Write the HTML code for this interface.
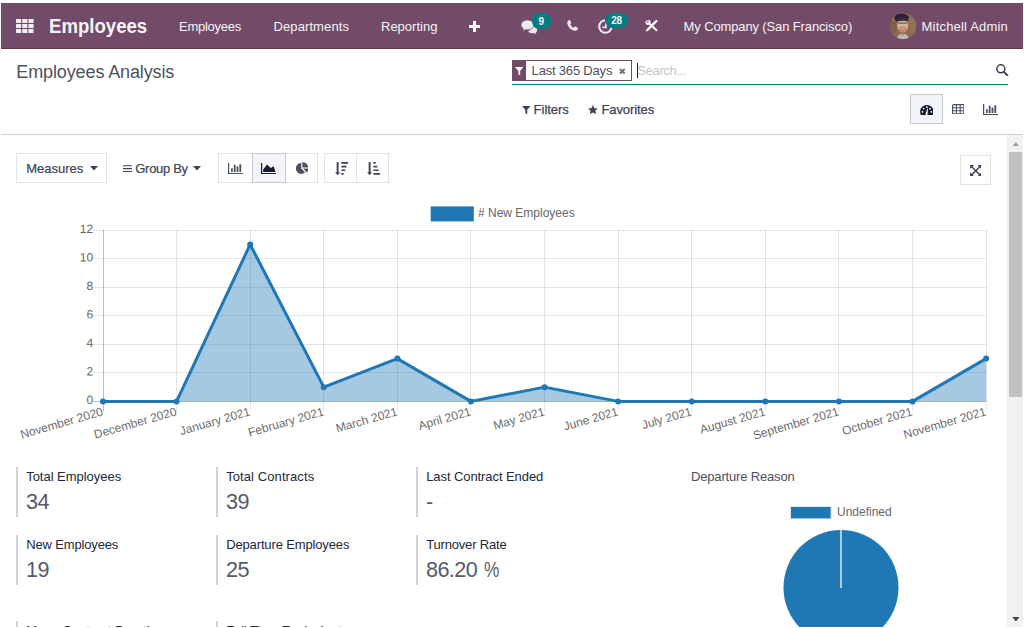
<!DOCTYPE html>
<html lang="en">
<head>
<meta charset="utf-8">
<title>Odoo - Employees Analysis</title>
<style>
*{box-sizing:border-box;margin:0;padding:0}
html,body{width:1024px;height:628px;overflow:hidden;background:#fff}
body{font-family:"Liberation Sans",sans-serif;font-size:13px;color:#4c5160;position:relative}
#app{position:absolute;left:0;top:0;width:1024px;height:628px;overflow:hidden;background:#fff}
#app span,#app a,#app div,#app nav,#app header,#app section,#app button,#app svg,#app h1,#app label{position:absolute;white-space:nowrap}
#app a{text-decoration:none}
nav.navbar{left:1px;top:3px;width:1022px;height:46px;background:#714b67;border-bottom:1px solid #5a3b52}
.btn{border:1px solid #e1e2e5;background:#fff}
.btn.active{background:#f3f4f7;border-color:#c5c9d2}
.stat{width:2px;background:#cfd2d8}
</style>
</head>
<body>
<div id="app">
<nav class="navbar">
<svg style="left:14.6px;top:16.1px" width="18" height="14" viewBox="0 0 18 14"><g fill="#f0eef0"><rect x="0" y="0" width="5.2" height="3.9" rx="0.5"/><rect x="6.2" y="0" width="5.2" height="3.9" rx="0.5"/><rect x="12.4" y="0" width="5.2" height="3.9" rx="0.5"/><rect x="0" y="5" width="5.2" height="3.9" rx="0.5"/><rect x="6.2" y="5" width="5.2" height="3.9" rx="0.5"/><rect x="12.4" y="5" width="5.2" height="3.9" rx="0.5"/><rect x="0" y="10" width="5.2" height="3.9" rx="0.5"/><rect x="6.2" y="10" width="5.2" height="3.9" rx="0.5"/><rect x="12.4" y="10" width="5.2" height="3.9" rx="0.5"/></g></svg>
<a style="left:48px;top:12px;font-size:20px;line-height:22px;height:22px;color:#f6f3f5;font-weight:700;transform:scaleX(0.93);transform-origin:0 0;">Employees</a>
<a style="left:178px;top:16.4px;font-size:13px;line-height:15px;height:15px;color:#f6f3f5;letter-spacing:-0.26px;">Employees</a>
<a style="left:272.5px;top:16.4px;font-size:13px;line-height:15px;height:15px;color:#f6f3f5;letter-spacing:0.1px;">Departments</a>
<a style="left:380px;top:16.4px;font-size:13px;line-height:15px;height:15px;color:#f6f3f5;">Reporting</a>
<svg style="left:468px;top:17.600px" width="11" height="11" viewBox="0 0 11 11"><path d="M4 0h3v4h4v3h-4v4h-3v-4h-4v-3h4z" fill="#fff"/></svg>
<svg style="left:519.500px;top:16.700px" width="17" height="14" viewBox="0 0 17 14"><path d="M11.600 6.400c2.600 .200 4.700 1.700 4.700 3.500c0 1.100-.700 2-1.800 2.700c.200 .500 .600 .900 1.100 1.300c-1 0-2-.300-2.800-.900c-.500 .100-1 .200-1.500 .200c-1.700 0-3.200-.600-4.100-1.500z" fill="#ece8eb"/><path d="M6.400 0c3.500 0 6.400 2.200 6.400 4.900s-2.900 4.900-6.400 4.900c-.600 0-1.200-.100-1.700-.200c-1 .800-2.200 1.300-3.500 1.300c.700-.700 1.100-1.400 1.200-2.200c-1.500-.900-2.400-2.300-2.400-3.800c0-2.700 2.900-4.900 6.400-4.900z" fill="#ece8eb" stroke="#714b67" stroke-width=".7"/></svg>
<span style="left:530.900px;top:9.800px;width:19.100px;height:16.300px;border-radius:8.200px;background:#017e84"></span>
<span style="left:537.6px;top:13px;font-size:10px;line-height:11px;height:11px;color:#f6f3f5;font-weight:700;">9</span>
<svg style="left:565.600px;top:17.100px" width="11.500" height="11" viewBox="0 0 11.500 11"><path d="M1.300 .500c.500-.500 1.300-.600 1.700 0l1.100 1.800c.300 .500 .200 1-.200 1.400l-.700 .700c.700 1.500 1.900 2.600 3.400 3.300l.700-.800c.400-.400 .900-.500 1.400-.200l1.800 1.100c.600 .400 .600 1.100 .100 1.600c-.800 .900-1.800 1.500-3.100 1.300c-3.600-.600-6.600-3.600-7.200-7.200c-.200-1.200 .300-2.300 1-3z" fill="#ece8eb"/></svg>
<svg style="left:596.900px;top:15.800px" width="15" height="15" viewBox="0 0 15 15"><circle cx="7.400" cy="7.500" r="6.200" fill="none" stroke="#ece8eb" stroke-width="2.100"/><path d="M7.900 3.600v4.700h-3.400" fill="none" stroke="#ece8eb" stroke-width="1.700"/></svg>
<span style="left:603.800px;top:9.800px;width:23.500px;height:15.400px;border-radius:7.700px;background:#017e84"></span>
<span style="left:610.3px;top:12px;font-size:10px;line-height:11px;height:11px;color:#f6f3f5;font-weight:700;letter-spacing:-0.35px;">28</span>
<svg style="left:644.200px;top:16.100px" width="13.500" height="13.500" viewBox="0 0 13.500 13.500"><path d="M3.600 3.800L11.500 11.200" stroke="#fff" stroke-width="1.900" fill="none" stroke-linecap="round"/><circle cx="2.950" cy="3.150" r="2.550" fill="#fff"/><path d="M2.600 2.500m-1.250 0a1.250 1.250 0 1 0 2.500 0a1.250 1.250 0 1 0-2.500 0M1.400 2.600L0 -.500L3.700 0L3.800 2.200z" fill="#714b67"/><path d="M11.200 .600l1.600 1.600l-9.900 9.900l-2.200 .500l.500-2.200z" fill="#fff"/></svg>
<a style="left:682.6px;top:16.4px;font-size:13px;line-height:15px;height:15px;color:#f6f3f5;letter-spacing:-0.13px;">My Company (San Francisco)</a>
<svg class="avatar" style="left:888.800px;top:10px" width="26.300" height="26.200" viewBox="0 0 26 26"><defs><clipPath id="av"><circle cx="13" cy="13" r="13"/></clipPath></defs><g clip-path="url(#av)"><rect width="26" height="26" fill="#8d6c53"/><rect x="0" y="8" width="6" height="12" fill="#7f5f47"/><rect x="20" y="4" width="6" height="16" fill="#94725a"/><ellipse cx="11.500" cy="5" rx="7.200" ry="4.600" fill="#262233"/><ellipse cx="12.600" cy="12" rx="5.400" ry="7.300" fill="#d3b3a0"/><path d="M7.500 5.500q5-2.500 10 0l.400 3q-5.400-1.500-10.800 0z" fill="#3b2d33"/><rect x="8.200" y="9.300" width="8.800" height="1.600" fill="#7a5a50" opacity=".8"/><ellipse cx="12.600" cy="16.300" rx="3.800" ry="3" fill="#c08a68"/><ellipse cx="12.600" cy="15.600" rx="2" ry="1" fill="#d9a48c"/><path d="M6.500 26q1-5.500 6-5.500t6.500 5.500z" fill="#bdb6b6"/><path d="M11 20l1.700 3l1.700-3z" fill="#a9826b"/></g></svg>
<a style="left:920.6px;top:16.4px;font-size:13px;line-height:15px;height:15px;color:#f6f3f5;letter-spacing:0.18px;">Mitchell Admin</a>
</nav>
<header class="control-panel" style="left:1px;top:49px;width:1022px;height:86px;border-bottom:1px solid #cdd0d8">
<h1 style="left:15.3px;top:13px;font-size:18px;line-height:20px;height:20px;color:#4c5160;letter-spacing:-0.12px;font-weight:400;">Employees Analysis</h1>
<div style="left:511px;top:11.2px;width:120px;height:20.6px;border:1px solid #714b67;background:#fff"></div>
<div style="left:511px;top:11.2px;width:13.6px;height:20.6px;background:#714b67"></div>
<svg style="left:513.700px;top:18.300px" width="8.500" height="8.600" viewBox="0 0 9 9"><path d="M0 0h9l-3.500 4v4.900l-2-1.600v-3.300z" fill="#fff"/></svg>
<span style="left:530.6px;top:14.3px;font-size:13px;line-height:15px;height:15px;color:#4c5160;letter-spacing:-0.19px;">Last 365 Days</span>
<svg style="left:618.100px;top:18.800px" width="6.600" height="6.600" viewBox="0 0 7 7"><path d="M1 1l5 5M6 1l-5 5" stroke="#707277" stroke-width="2.100"/></svg>
<span style="left:636px;top:14px;width:1px;height:15px;background:#222"></span>
<span style="left:636.5px;top:14.3px;font-size:13px;line-height:15px;height:15px;color:#c3c6cc;letter-spacing:-0.4px;">Search...</span>
<svg style="left:995.100px;top:14.900px" width="12.500" height="12.500" viewBox="0 0 12.500 12.500"><circle cx="4.850" cy="4.850" r="4" fill="none" stroke="#3a3f52" stroke-width="1.500"/><path d="M7.900 7.900l3.500 3.500" stroke="#3a3f52" stroke-width="1.900" stroke-linecap="round"/></svg>
<div style="left:511px;top:34.700px;width:496px;height:1.200px;background:#017e84"></div>
<svg style="left:521px;top:57px" width="8.500" height="8.500" viewBox="0 0 9 9"><path d="M0 0h9l-3.500 4v4.900l-2-1.600v-3.300z" fill="#3d4254"/></svg>
<span style="left:532.6px;top:53px;font-size:13px;line-height:15px;height:15px;color:#3d4254;letter-spacing:-0.02px;-webkit-text-stroke:0.25px #3d4254;">Filters</span>
<svg style="left:587.300px;top:56.200px" width="9.800" height="9.300" viewBox="0 0 10 9.500"><path d="M5 0l1.500 3.200l3.500 .400l-2.600 2.300l.700 3.500l-3.100-1.800l-3.100 1.800l.700-3.500l-2.600-2.300l3.500-.400z" fill="#3d4254"/></svg>
<span style="left:600.5px;top:53px;font-size:13px;line-height:15px;height:15px;color:#3d4254;letter-spacing:-0.1px;-webkit-text-stroke:0.25px #3d4254;">Favorites</span>
<button class="btn active" style="left:909px;top:45px;width:33px;height:30px"></button>
<svg style="left:918.700px;top:55.600px" width="13.700" height="10.400" viewBox="0 0 14 10.600"><path d="M7 0a7 7 0 0 1 7 7c0 1.200-.300 2.400-.900 3.300a.6 .6 0 0 1-.500 .300h-11.200a.6 .6 0 0 1-.500-.300a7 7 0 0 1 6.100-10.300z" fill="#161a2c"/><g fill="#fff"><circle cx="2.400" cy="7" r=".95"/><circle cx="3.700" cy="3.700" r=".95"/><circle cx="7" cy="2.200" r=".95"/><circle cx="10.300" cy="3.700" r=".95"/><circle cx="11.600" cy="7" r=".95"/><path d="M6 8.200l1.400-4.300l.800 .200l-.500 4.400a1.100 1.100 0 1 1-1.700-.300z"/></g></svg>
<svg style="left:950.600px;top:54.900px" width="12.600" height="10.400" viewBox="0 0 12.600 10.400"><rect x=".6" y=".6" width="11.400" height="9.200" rx="1" fill="none" stroke="#4c5160" stroke-width="1.200"/><path d="M.6 3.700h11.400M.6 6.700h11.400M4.400 .6v9.200M8.200 .6v9.200" stroke="#4c5160" stroke-width="1.100" fill="none"/></svg>
<svg style="left:981.8px;top:54.9px" width="15.400" height="11.200" viewBox="0 0 15.400 11.200"><path d="M.6 0V10.500H15.400" stroke="#4c5160" stroke-width="1.200" fill="none"/><path d="M3 5.300h1.800v3.600h-1.800zM5.800 1.700h1.800v7.200h-1.800zM8.600 3.400h1.800v5.500h-1.800zM11.400 1.200h1.800v7.700h-1.800z" fill="#4c5160"/></svg>
</header>
<section class="o_graph_buttons" style="left:0;top:135px;width:1007px;height:60px">
<button class="btn" style="left:16px;top:18px;width:91px;height:30px"></button>
<span style="left:26.2px;top:26px;font-size:13px;line-height:15px;height:15px;color:#3d4254;-webkit-text-stroke:0.2px #3d4254;">Measures</span>
<svg style="left:89.800px;top:30.800px" width="8" height="5" viewBox="0 0 8 5"><path d="M0 0h8l-4 4.600z" fill="#3d4254"/></svg>
<svg style="left:123px;top:30.400px" width="9" height="7.500" viewBox="0 0 9 7.500"><path d="M0 .7h9M0 3.600h9M0 6.500h9" stroke="#3d4254" stroke-width="1.100"/></svg>
<span style="left:135.3px;top:26px;font-size:13px;line-height:15px;height:15px;color:#3d4254;letter-spacing:-0.3px;-webkit-text-stroke:0.2px #3d4254;">Group By</span>
<svg style="left:193.400px;top:30.800px" width="8" height="5" viewBox="0 0 8 5"><path d="M0 0h8l-4 4.600z" fill="#3d4254"/></svg>
<button class="btn" style="left:218px;top:18px;width:35px;height:30px"></button>
<button class="btn" style="left:285px;top:18px;width:33px;height:30px"></button>
<button class="btn active" style="left:252px;top:18px;width:34px;height:30px"></button>
<svg style="left:227.7px;top:27.8px" width="15.400" height="11.200" viewBox="0 0 15.400 11.200"><path d="M.6 0V10.500H15.400" stroke="#4c5160" stroke-width="1.200" fill="none"/><path d="M3 5.300h1.800v3.600h-1.800zM5.800 1.700h1.800v7.200h-1.800zM8.600 3.400h1.800v5.500h-1.800zM11.400 1.200h1.800v7.700h-1.800z" fill="#4c5160"/></svg>
<svg style="left:261px;top:27.800px" width="15.400" height="11.200" viewBox="0 0 15.400 11.200"><path d="M.6 0V10.500H15.400" stroke="#161a2c" stroke-width="1.200" fill="none"/><path d="M2.100 9v-2.300l3.900-5.100l3.800 3.400l2.800-1.700l1.900 5.700z" fill="#161a2c"/></svg>
<svg style="left:295.500px;top:27px" width="12.600" height="11.800" viewBox="0 0 12.600 11.800"><path d="M5.300 1.100v5.400l3.800 3.800a5.400 5.400 0 1 1-3.800-9.200z" fill="#4c5160"/><path d="M6.400 0a5.700 5.700 0 0 1 5.700 5.500h-5.700z" fill="#4c5160"/><path d="M7 6.600h5.500a5.700 5.700 0 0 1-1.600 3.900z" fill="#4c5160"/></svg>
<button class="btn" style="left:324px;top:18px;width:33px;height:30px"></button>
<button class="btn" style="left:356px;top:18px;width:33px;height:30px"></button>
<svg style="left:334.6px;top:26.900px" width="13.500" height="13.500" viewBox="0 0 13.500 13.500"><path d="M2.600 0v10.800" stroke="#3d4254" stroke-width="1.900"/><path d="M0 10.200h5.200l-2.600 3z" fill="#3d4254"/><path d="M6.400 0.95h6.9M6.400 4.6h5.1M6.400 8.25h3.9M6.400 11.9h2.3" stroke="#3d4254" stroke-width="1.700"/></svg>
<svg style="left:366.8px;top:26.900px" width="13.500" height="13.500" viewBox="0 0 13.500 13.500"><path d="M2.600 0v10.800" stroke="#3d4254" stroke-width="1.900"/><path d="M0 10.200h5.200l-2.600 3z" fill="#3d4254"/><path d="M6.400 0.95h2.3M6.400 4.6h3.9M6.400 8.25h5.1M6.400 11.9h6.9" stroke="#3d4254" stroke-width="1.700"/></svg>
<button class="btn" style="left:960px;top:20px;width:31px;height:29.500px"></button>
<svg style="left:969.700px;top:29.800px" width="11.500" height="11.300" viewBox="0 0 12 12"><path d="M1.500 1.500l9 9M10.500 1.500l-9 9" stroke="#3a3f52" stroke-width="1.500"/><path d="M0 0h4.200l-4.200 4.200zM12 0v4.200l-4.200-4.200zM0 12v-4.200l4.200 4.200zM12 12h-4.200l4.200-4.200z" fill="#3a3f52"/></svg>
</section>
<svg class="chart" style="left:0;top:195px" width="1007" height="260" viewBox="0 195 1007 260" font-family="'Liberation Sans', sans-serif" font-size="12">
<rect x="430.700" y="206.400" width="43.100" height="15" fill="#1f77b4"/>
<text x="478" y="217.300" fill="#666">#&#160;New Employees</text>
<path d="M93.0 372.5H986.6 M93.0 344.5H986.6 M93.0 315.5H986.6 M93.0 287.5H986.6 M93.0 258.5H986.6 M93.0 230.5H986.6 M176.5 229.7V411.4 M250.5 229.7V411.4 M323.5 229.7V411.4 M397.5 229.7V411.4 M470.5 229.7V411.4 M544.5 229.7V411.4 M618.5 229.7V411.4 M691.5 229.7V411.4 M765.5 229.7V411.4 M838.5 229.7V411.4 M912.5 229.7V411.4 M986.5 229.7V411.4" stroke="rgba(0,0,0,0.1)" stroke-width="1" fill="none"/>
<path d="M93.0 401.5H986.6M103.5 229.7V411.4" stroke="rgba(0,0,0,0.25)" stroke-width="1" fill="none"/>
<polygon points="103.00,401.40 103.00,401.40 176.59,401.40 250.18,244.47 323.77,387.13 397.37,358.60 470.96,401.40 544.55,387.13 618.14,401.40 691.73,401.40 765.33,401.40 838.92,401.40 912.51,401.40 986.10,358.60 986.10,401.40" fill="rgba(31,119,180,0.4)"/>
<polyline points="103.00,401.40 176.59,401.40 250.18,244.47 323.77,387.13 397.37,358.60 470.96,401.40 544.55,387.13 618.14,401.40 691.73,401.40 765.33,401.40 838.92,401.40 912.51,401.40 986.10,358.60" fill="none" stroke="#1f77b4" stroke-width="3" stroke-linejoin="round"/>
<circle cx="103.00" cy="401.40" r="3" fill="#1f77b4"/>
<circle cx="176.59" cy="401.40" r="3" fill="#1f77b4"/>
<circle cx="250.18" cy="244.47" r="3" fill="#1f77b4"/>
<circle cx="323.77" cy="387.13" r="3" fill="#1f77b4"/>
<circle cx="397.37" cy="358.60" r="3" fill="#1f77b4"/>
<circle cx="470.96" cy="401.40" r="3" fill="#1f77b4"/>
<circle cx="544.55" cy="387.13" r="3" fill="#1f77b4"/>
<circle cx="618.14" cy="401.40" r="3" fill="#1f77b4"/>
<circle cx="691.73" cy="401.40" r="3" fill="#1f77b4"/>
<circle cx="765.33" cy="401.40" r="3" fill="#1f77b4"/>
<circle cx="838.92" cy="401.40" r="3" fill="#1f77b4"/>
<circle cx="912.51" cy="401.40" r="3" fill="#1f77b4"/>
<circle cx="986.10" cy="358.60" r="3" fill="#1f77b4"/>
<text transform="translate(93.2,404.10) rotate(-0.050)" text-anchor="end" fill="#666">0</text>
<text transform="translate(93.2,375.57) rotate(-0.050)" text-anchor="end" fill="#666">2</text>
<text transform="translate(93.2,347.03) rotate(-0.050)" text-anchor="end" fill="#666">4</text>
<text transform="translate(93.2,318.50) rotate(-0.050)" text-anchor="end" fill="#666">6</text>
<text transform="translate(93.2,289.97) rotate(-0.050)" text-anchor="end" fill="#666">8</text>
<text transform="translate(93.2,261.43) rotate(-0.050)" text-anchor="end" fill="#666">10</text>
<text transform="translate(93.2,232.90) rotate(-0.050)" text-anchor="end" fill="#666">12</text>
<text transform="translate(102.60,411.00) rotate(-16.100)" x="0" y="4.200" text-anchor="end" fill="#6c6c6c">November 2020</text>
<text transform="translate(176.19,411.00) rotate(-16.100)" x="0" y="4.200" text-anchor="end" fill="#6c6c6c">December 2020</text>
<text transform="translate(249.78,411.00) rotate(-16.100)" x="0" y="4.200" text-anchor="end" fill="#6c6c6c">January 2021</text>
<text transform="translate(323.38,411.00) rotate(-16.100)" x="0" y="4.200" text-anchor="end" fill="#6c6c6c">February 2021</text>
<text transform="translate(396.97,411.00) rotate(-16.100)" x="0" y="4.200" text-anchor="end" fill="#6c6c6c">March 2021</text>
<text transform="translate(470.56,411.00) rotate(-16.100)" x="0" y="4.200" text-anchor="end" fill="#6c6c6c">April 2021</text>
<text transform="translate(544.15,411.00) rotate(-16.100)" x="0" y="4.200" text-anchor="end" fill="#6c6c6c">May 2021</text>
<text transform="translate(617.74,411.00) rotate(-16.100)" x="0" y="4.200" text-anchor="end" fill="#6c6c6c">June 2021</text>
<text transform="translate(691.33,411.00) rotate(-16.100)" x="0" y="4.200" text-anchor="end" fill="#6c6c6c">July 2021</text>
<text transform="translate(764.93,411.00) rotate(-16.100)" x="0" y="4.200" text-anchor="end" fill="#6c6c6c">August 2021</text>
<text transform="translate(838.52,411.00) rotate(-16.100)" x="0" y="4.200" text-anchor="end" fill="#6c6c6c">September 2021</text>
<text transform="translate(912.11,411.00) rotate(-16.100)" x="0" y="4.200" text-anchor="end" fill="#6c6c6c">October 2021</text>
<text transform="translate(985.70,411.00) rotate(-16.100)" x="0" y="4.200" text-anchor="end" fill="#6c6c6c">November 2021</text>
</svg>
<section class="o_aggregates" style="left:0;top:455px;width:690px;height:173px">
<div class="stat" style="left:16px;top:12px;height:50px"></div>
<label style="left:26.2px;top:13.6px;font-size:13px;line-height:15px;height:15px;color:#23273a;letter-spacing:-0.03px;">Total Employees</label>
<span style="left:26px;top:34.2px;font-size:21.6px;line-height:25px;height:25px;color:#555a6a;letter-spacing:-0.6px;">34</span>
<div class="stat" style="left:216px;top:12px;height:50px"></div>
<label style="left:226.2px;top:13.6px;font-size:13px;line-height:15px;height:15px;color:#23273a;letter-spacing:0.09px;">Total Contracts</label>
<span style="left:226px;top:34.2px;font-size:21.6px;line-height:25px;height:25px;color:#555a6a;letter-spacing:-0.6px;">39</span>
<div class="stat" style="left:416px;top:12px;height:50px"></div>
<label style="left:426.2px;top:13.6px;font-size:13px;line-height:15px;height:15px;color:#23273a;letter-spacing:-0.08px;">Last Contract Ended</label>
<span style="left:426px;top:34.2px;font-size:21.6px;line-height:25px;height:25px;color:#555a6a;letter-spacing:-0.6px;">-</span>
<div class="stat" style="left:16px;top:80px;height:50px"></div>
<label style="left:26.2px;top:81.6px;font-size:13px;line-height:15px;height:15px;color:#23273a;letter-spacing:-0.15px;">New Employees</label>
<span style="left:26px;top:102.2px;font-size:21.6px;line-height:25px;height:25px;color:#555a6a;letter-spacing:-0.6px;">19</span>
<div class="stat" style="left:216px;top:80px;height:50px"></div>
<label style="left:226.2px;top:81.6px;font-size:13px;line-height:15px;height:15px;color:#23273a;letter-spacing:-0.14px;">Departure Employees</label>
<span style="left:226px;top:102.2px;font-size:21.6px;line-height:25px;height:25px;color:#555a6a;letter-spacing:-0.6px;">25</span>
<div class="stat" style="left:416px;top:80px;height:50px"></div>
<label style="left:426.2px;top:81.6px;font-size:13px;line-height:15px;height:15px;color:#23273a;letter-spacing:-0.18px;">Turnover Rate</label>
<span style="left:426px;top:102.2px;font-size:21.6px;line-height:25px;height:25px;color:#555a6a;letter-spacing:-0.6px;">86.20</span>
<span style="left:484px;top:102.2px;font-size:21.6px;line-height:25px;height:25px;color:#555a6a;transform:scaleX(0.8);transform-origin:0 0;">%</span>
<div class="stat" style="left:16px;top:166px;height:50px"></div>
<label style="left:26.2px;top:167.6px;font-size:13px;line-height:15px;height:15px;color:#23273a;">Mean Contract Duration</label>
<span style="left:26px;top:188.2px;font-size:21.6px;line-height:25px;height:25px;color:#555a6a;letter-spacing:-0.6px;">0</span>
<div class="stat" style="left:216px;top:166px;height:50px"></div>
<label style="left:226.2px;top:167.6px;font-size:13px;line-height:15px;height:15px;color:#23273a;letter-spacing:-0.1px;">Full Time Equivalent</label>
<span style="left:226px;top:188.2px;font-size:21.6px;line-height:25px;height:25px;color:#555a6a;letter-spacing:-0.6px;">0</span>
</section>
<label style="left:691px;top:468.6px;font-size:13px;line-height:15px;height:15px;color:#4c5160;letter-spacing:-0.17px;">Departure Reason</label>
<svg class="pie" style="left:700px;top:495px" width="300" height="133" viewBox="700 495 300 133" font-family="'Liberation Sans', sans-serif" font-size="12">
<rect x="790.400" y="506.500" width="40.700" height="12.400" fill="#1f77b4" stroke="#e4e8ec" stroke-width="1"/>
<text x="837" y="516.300" fill="#666">Undefined</text>
<circle cx="841" cy="587.500" r="57.500" fill="#1f77b4"/>
<path d="M841 530V588" stroke="#edf3f8" stroke-width="1.400"/>
</svg>
<div class="scrollbar" style="left:1007px;top:135px;width:16px;height:492px;background:#f1f1f1">
<div style="left:2px;top:17px;width:13px;height:245px;background:#c1c1c1"></div>
<svg style="left:4.600px;top:6.700px" width="7.800" height="4.600" viewBox="0 0 7 4.500"><path d="M0 4.500l3.500-4.500l3.500 4.500z" fill="#9a9ca3"/></svg>
<svg style="left:4.600px;top:481.800px" width="7.800" height="4.600" viewBox="0 0 7 4.500"><path d="M0 0h7l-3.500 4.500z" fill="#3c4152"/></svg>
</div>
<div style="left:1023px;top:0;width:1px;height:628px;background:#fff"></div><div style="left:0;top:627px;width:1024px;height:1px;background:#fff"></div>
</div>
</body>
</html>
